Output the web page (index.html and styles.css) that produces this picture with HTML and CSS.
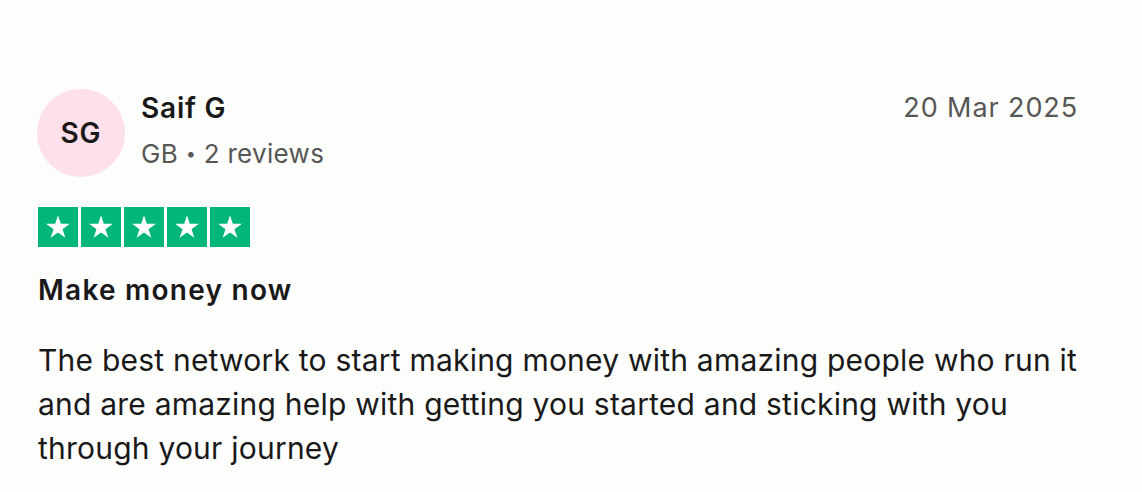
FILE: index.html
```html
<!DOCTYPE html>
<html lang="en">
<head>
<meta charset="utf-8">
<title>Review</title>
<link rel="stylesheet" href="styles.css">
</head>
<body>
<article class="review">
  <header class="review-header">
    <div class="avatar">SG</div>
    <div class="consumer">
      <div class="consumer-name">Saif G</div>
      <div class="consumer-meta">GB <span class="dot">•</span> 2 reviews</div>
    </div>
    <time class="review-date">20 Mar 2025</time>
  </header>
  <div class="stars" aria-label="Rated 5 out of 5">
    <span class="star"><svg viewBox="0 0 24 24"><path d="M12 3.2l2.1 6.45h6.8l-5.5 4 2.1 6.45L12 16.1l-5.5 4 2.1-6.45-5.5-4h6.8z"/></svg></span>
    <span class="star"><svg viewBox="0 0 24 24"><path d="M12 3.2l2.1 6.45h6.8l-5.5 4 2.1 6.45L12 16.1l-5.5 4 2.1-6.45-5.5-4h6.8z"/></svg></span>
    <span class="star"><svg viewBox="0 0 24 24"><path d="M12 3.2l2.1 6.45h6.8l-5.5 4 2.1 6.45L12 16.1l-5.5 4 2.1-6.45-5.5-4h6.8z"/></svg></span>
    <span class="star"><svg viewBox="0 0 24 24"><path d="M12 3.2l2.1 6.45h6.8l-5.5 4 2.1 6.45L12 16.1l-5.5 4 2.1-6.45-5.5-4h6.8z"/></svg></span>
    <span class="star"><svg viewBox="0 0 24 24"><path d="M12 3.2l2.1 6.45h6.8l-5.5 4 2.1 6.45L12 16.1l-5.5 4 2.1-6.45-5.5-4h6.8z"/></svg></span>
  </div>
  <h2 class="review-title">Make money now</h2>
  <p class="review-text">The best network to start making money with amazing people who run it and are amazing help with getting you started and sticking with you through your journey</p>
</article>
</body>
</html>
```

FILE: styles.css
```css
html, body {
  margin: 0;
  padding: 0;
  background: #fdfdfc;
}
body {
  font-family: Inter, "Noto Sans", "Liberation Sans", sans-serif;
  color: #191919;
}
.review {
  padding: 89px 64px 0 38px;
}
.review-header {
  display: flex;
  align-items: flex-start;
  gap: 16px;
}
.avatar {
  width: 88px;
  height: 88px;
  border-radius: 50%;
  background: #fde0ea;
  color: #191919;
  display: flex;
  align-items: center;
  justify-content: center;
  font-size: 28px;
  font-weight: 600;
  letter-spacing: 1px;
  flex: none;
  margin-left: -1px;
}
.consumer {
  flex: 1;
  display: flex;
  flex-direction: column;
  padding-top: 1px;
}
.consumer-name {
  font-size: 28px;
  font-weight: 600;
  letter-spacing: 0.8px;
  line-height: 36px;
}
.consumer-meta {
  font-size: 26px;
  color: #575755;
  letter-spacing: 0.3px;
  line-height: 36px;
  margin-top: 10px;
}
.dot {
  font-size: 18px;
  vertical-align: 3px;
}
.review-date {
  font-size: 27px;
  color: #575755;
  letter-spacing: 0.9px;
  line-height: 36px;
  padding-top: 1px;
}
.stars {
  display: flex;
  gap: 3px;
  margin-top: 30px;
}
.star {
  width: 40px;
  height: 40px;
  background: #00b67a;
  display: flex;
  align-items: center;
  justify-content: center;
}
.star svg {
  width: 32px;
  height: 32px;
  fill: #fff;
}
.review-title {
  font-size: 28px;
  font-weight: 600;
  letter-spacing: 1.25px;
  line-height: 36px;
  margin: 25px 0 0;
}
.review-text {
  font-size: 30px;
  letter-spacing: 0.22px;
  line-height: 44px;
  margin: 30px 0 0;
}
```
